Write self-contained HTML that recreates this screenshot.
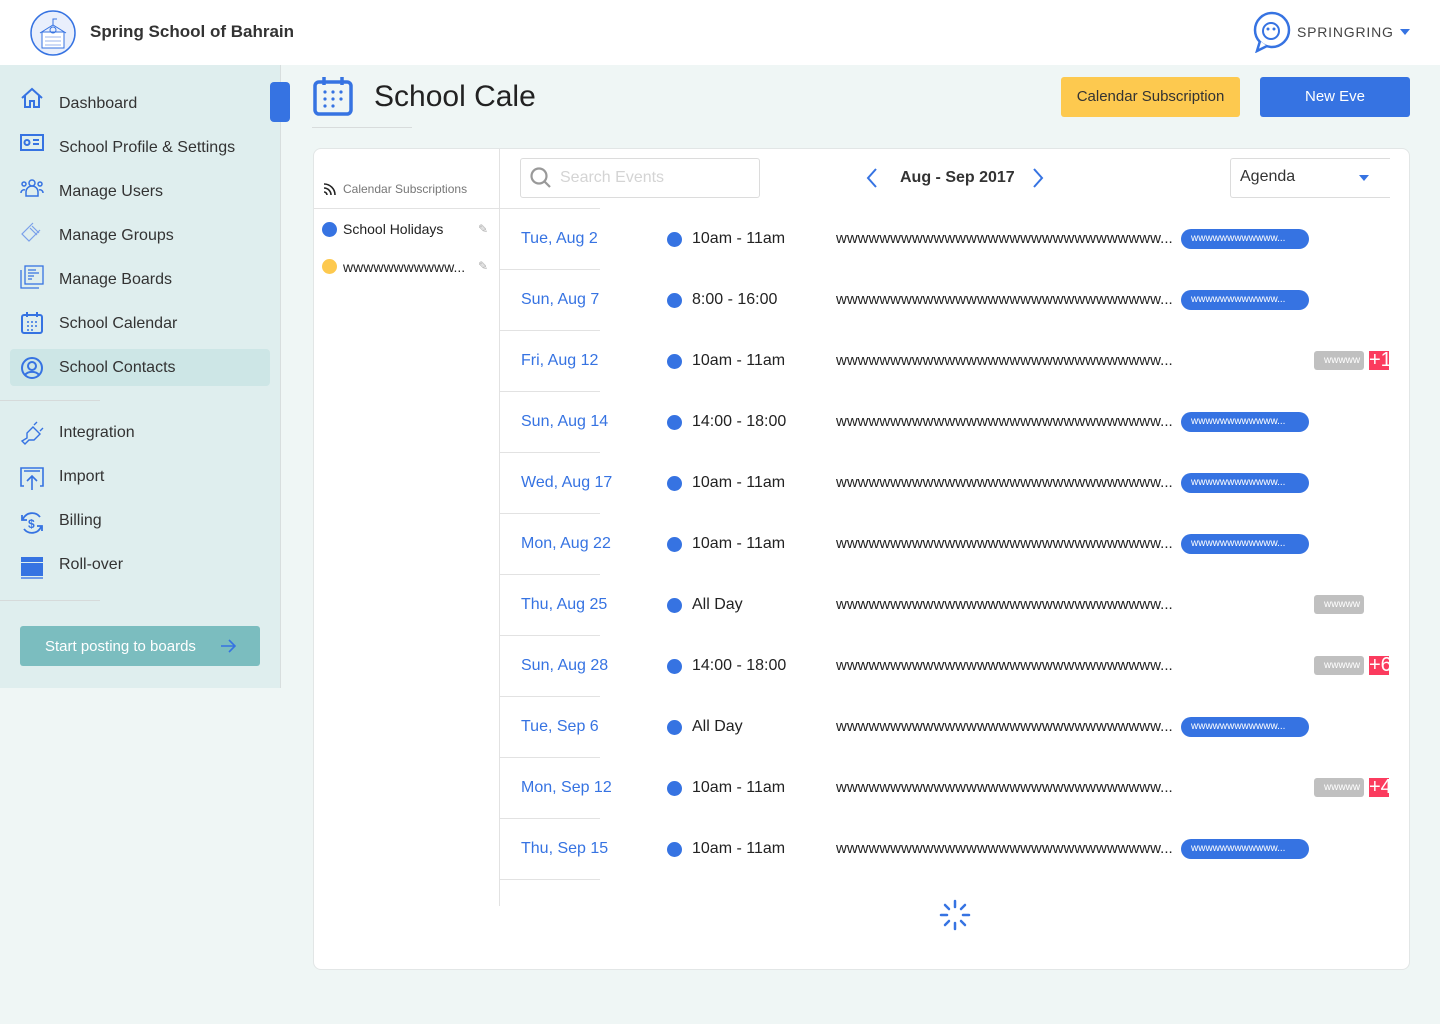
<!DOCTYPE html>
<html><head><meta charset="utf-8"><style>
*{box-sizing:border-box;margin:0;padding:0}
body{width:1440px;height:1024px;background:#eff6f5;font-family:"Liberation Sans",Arial,sans-serif;position:relative;overflow:hidden;color:#333}
.a{position:absolute}
.hdr{left:0;top:0;width:1440px;height:65px;background:#fff}
.side{left:0;top:65px;width:281px;height:623px;background:#dfeeee;border-right:1px solid #d8dede}
.nav{position:absolute;left:59px;font-size:16px;color:#333}
.ic{position:absolute;left:20px;width:24px;height:24px}
.card{left:313px;top:148px;width:1097px;height:822px;background:#fff;border:1px solid #e2e6e6;border-radius:8px}
.date{position:absolute;left:521px;font-size:16px;color:#3673e2}
.dot{position:absolute;left:667px;width:15px;height:15px;border-radius:50%;background:#3673e2}
.time{position:absolute;left:692px;font-size:16px;color:#222}
.ev{position:absolute;left:836px;width:340px;font-size:15px;color:#222;white-space:nowrap;overflow:hidden}
.pill{position:absolute;left:1181px;width:128px;height:20px;border-radius:10px;background:#3673e2;color:#fff;font-size:10px;line-height:20px;padding-left:10px;white-space:nowrap;overflow:hidden}
.gray{position:absolute;left:1314px;width:50px;height:19px;border-radius:3px;background:#c0c0c0;color:#fff;font-size:10px;line-height:19px;padding-left:10px;overflow:hidden;white-space:nowrap}
.red{position:absolute;left:1369px;width:20px;height:19px;background:#fb3b5e;color:#fff;font-size:20px;line-height:19px;overflow:hidden;white-space:nowrap}
.sep{position:absolute;left:500px;width:100px;height:1px;background:#e2e2e2}
</style></head><body>
<div class="a hdr"></div>
<svg class="a" style="left:30px;top:10px" width="46" height="46" viewBox="0 0 46 46"><circle cx="23" cy="23" r="22" fill="#e9effc" stroke="#3673e2" stroke-width="1.5"/><rect x="12" y="22" width="22" height="16" fill="#fff" stroke="#3673e2"/><path d="M10 23 L23 15 L36 23" fill="none" stroke="#3673e2"/><circle cx="23" cy="20" r="3" fill="none" stroke="#3673e2"/><path d="M23 15V9h4" stroke="#3673e2" fill="none"/><path d="M15 27h16M15 31h16M15 35h16" stroke="#9bb6ee"/></svg>
<div class="a" style="left:90px;top:22px;font-size:17px;font-weight:bold;color:#333">Spring School of Bahrain</div>
<svg class="a" style="left:1252px;top:11px" width="40" height="42" viewBox="0 0 40 42"><circle cx="20" cy="19" r="17" fill="none" stroke="#3673e2" stroke-width="2.5"/><path d="M8 30 L5 40 L15 35" fill="#fff" stroke="#3673e2" stroke-width="2.5"/><circle cx="19" cy="20" r="8" fill="none" stroke="#3673e2" stroke-width="2"/><circle cx="16" cy="18" r="1.5" fill="#3673e2"/><circle cx="22" cy="18" r="1.5" fill="#3673e2"/></svg>
<div class="a" style="left:1297px;top:24px;font-size:14px;letter-spacing:0.8px;color:#444">SPRINGRING</div>
<div class="a" style="left:1400px;top:29px;width:0;height:0;border-left:5px solid transparent;border-right:5px solid transparent;border-top:6px solid #3673e2"></div>

<div class="a side"></div>
<div class="a" style="left:270px;top:82px;width:20px;height:40px;border-radius:4px;background:#3673e2"></div>
<div class="a" style="left:10px;top:349px;width:260px;height:37px;border-radius:4px;background:#cde6e6"></div>
<div class="a" style="left:0;top:400px;width:100px;height:1px;background:#d6dada"></div>
<div class="a" style="left:0;top:600px;width:100px;height:1px;background:#d6dada"></div>

<svg class="ic" style="top:86px" viewBox="0 0 24 24" fill="none" stroke="#3673e2" stroke-width="2"><path d="M2 12L12 3l10 9M5 10v11h5v-6h4v6h5V10"/></svg>
<div class="nav" style="top:95px">Dashboard</div>
<svg class="ic" style="top:131px" viewBox="0 0 24 24" fill="none" stroke="#3673e2" stroke-width="2"><rect x="1" y="4" width="22" height="15"/><circle cx="7" cy="11.5" r="2.5"/><path d="M13 9h6M13 13h6"/></svg>
<div class="nav" style="top:139px">School Profile &amp; Settings</div>
<svg class="ic" style="top:176px" viewBox="0 0 24 24" fill="none" stroke="#3673e2" stroke-width="1.5"><circle cx="12" cy="7" r="3"/><circle cx="4" cy="8" r="2"/><circle cx="20" cy="8" r="2"/><path d="M6 20v-4a6 6 0 0112 0v4zM1 17a3 3 0 014-3M23 17a3 3 0 00-4-3"/></svg>
<div class="nav" style="top:183px">Manage Users</div>
<svg class="ic" style="top:221px" viewBox="0 0 24 24" fill="none" stroke="#7aa0ea" stroke-width="1.2"><path d="M13 2L2 13l7 7L20 9M10 7l7 7M12 5l7 7"/></svg>
<div class="nav" style="top:227px">Manage Groups</div>
<svg class="ic" style="top:265px" viewBox="0 0 24 24" fill="none" stroke="#3673e2" stroke-width="1.3"><rect x="5" y="1" width="18" height="18"/><path d="M1 5v18h18M8 5h8M8 8h11M8 11h6M8 14h4"/></svg>
<div class="nav" style="top:271px">Manage Boards</div>
<svg class="ic" style="top:311px" viewBox="0 0 24 24" fill="none" stroke="#3673e2" stroke-width="2"><rect x="2" y="4" width="20" height="18" rx="2"/><path d="M7 1v5M17 1v5" /><g fill="#3673e2" stroke="none"><circle cx="8" cy="11" r="1"/><circle cx="12" cy="11" r="1"/><circle cx="16" cy="11" r="1"/><circle cx="8" cy="15" r="1"/><circle cx="12" cy="15" r="1"/><circle cx="16" cy="15" r="1"/><circle cx="8" cy="19" r="1"/><circle cx="12" cy="19" r="1"/></g></svg>
<div class="nav" style="top:315px">School Calendar</div>
<svg class="ic" style="top:356px" viewBox="0 0 24 24" fill="none" stroke="#3673e2" stroke-width="2"><circle cx="12" cy="12" r="10"/><circle cx="12" cy="10" r="4"/><path d="M5 19a8 6 0 0114 0"/></svg>
<div class="nav" style="top:359px">School Contacts</div>
<svg class="ic" style="top:421px" viewBox="0 0 24 24" fill="none" stroke="#3673e2" stroke-width="1.4"><path d="M2 20l3 3 4-4 5 0 6-6-7-7-6 6 0 5zM14 4l3-3M20 10l3-3"/></svg>
<div class="nav" style="top:424px">Integration</div>
<svg class="ic" style="top:466px" viewBox="0 0 24 24" fill="none" stroke="#3673e2" stroke-width="1.6"><path d="M4 20H1V2h22v18h-3M4 5h16M12 24V10M7 15l5-5 5 5"/></svg>
<div class="nav" style="top:468px">Import</div>
<svg class="ic" style="top:511px" viewBox="0 0 24 24" fill="none" stroke="#3673e2" stroke-width="1.8"><path d="M3 8a10 10 0 0117-2M21 16a10 10 0 01-17 2M2 4v5h5M22 20v-5h-5"/><text x="8" y="17" font-size="12" font-weight="bold" fill="#3673e2" stroke="none" font-family="Liberation Sans">$</text></svg>
<div class="nav" style="top:512px">Billing</div>
<svg class="ic" style="top:556px" viewBox="0 0 24 24"><rect x="1" y="1" width="22" height="5" fill="#3673e2"/><rect x="1" y="7" width="22" height="13" fill="#3673e2"/><rect x="1" y="21" width="22" height="2" fill="#6f9be9"/></svg>
<div class="nav" style="top:556px">Roll-over</div>
<div class="a" style="left:20px;top:626px;width:240px;height:40px;border-radius:3px;background:#7bbdbf"></div>
<div class="a" style="left:45px;top:638px;font-size:15px;color:#fff">Start posting to boards</div>
<svg class="a" style="left:220px;top:639px" width="16" height="14" viewBox="0 0 16 14" fill="none" stroke="#3673e2" stroke-width="1.6"><path d="M1 7h14M9 1l6 6-6 6"/></svg>

<svg class="a" style="left:313px;top:76px" width="40" height="40" viewBox="0 0 40 40"><rect x="2" y="6" width="36" height="32" rx="4" fill="none" stroke="#3673e2" stroke-width="3.5"/><path d="M11 1v8M29 1v8" stroke="#3673e2" stroke-width="3.5"/><g fill="#3673e2"><circle cx="12" cy="16" r="1.6"/><circle cx="20" cy="16" r="1.6"/><circle cx="28" cy="16" r="1.6"/><circle cx="12" cy="23" r="1.6"/><circle cx="20" cy="23" r="1.6"/><circle cx="28" cy="23" r="1.6"/><circle cx="12" cy="30" r="1.6"/><circle cx="20" cy="30" r="1.6"/></g></svg>
<div class="a" style="left:374px;top:80px;font-size:30px;color:#222">School Cale</div>
<div class="a" style="left:312px;top:127px;width:100px;height:1px;background:#d8dcdc"></div>
<div class="a" style="left:1061px;top:77px;width:179px;height:40px;border-radius:3px;background:#fdc94f;color:#333;font-size:15px;text-align:center;line-height:40px">Calendar Subscription</div>
<div class="a" style="left:1260px;top:77px;width:150px;height:40px;border-radius:3px;background:#3673e2;color:#fff;font-size:15px;text-align:center;line-height:40px">New Eve</div>

<div class="a card"></div>
<div class="a" style="left:499px;top:149px;width:1px;height:757px;background:#e2e2e2"></div>
<div class="a" style="left:314px;top:208px;width:286px;height:1px;background:#e2e2e2"></div>
<svg class="a" style="left:323px;top:182px" width="14" height="14" viewBox="0 0 14 14" fill="none" stroke="#222" stroke-width="1.6"><path d="M1 2a11 11 0 0111 11M1 6a7 7 0 017 7M1 10a3 3 0 013 3"/></svg>
<div class="a" style="left:343px;top:182px;font-size:12px;color:#777">Calendar Subscriptions</div>
<div class="a" style="left:322px;top:222px;width:15px;height:15px;border-radius:50%;background:#3673e2"></div>
<div class="a" style="left:343px;top:221px;font-size:14px;color:#222">School Holidays</div>
<div class="a" style="left:322px;top:259px;width:15px;height:15px;border-radius:50%;background:#fdc94f"></div>
<div class="a" style="left:343px;top:259px;font-size:14px;color:#222">wwwwwwwwwww...</div>
<div class="a" style="left:478px;top:222px;font-size:12px;color:#aaa">✎</div>
<div class="a" style="left:478px;top:259px;font-size:12px;color:#aaa">✎</div>

<div class="a" style="left:520px;top:158px;width:240px;height:40px;border:1px solid #dcdcdc;border-radius:3px"></div>
<svg class="a" style="left:530px;top:167px" width="22" height="22" viewBox="0 0 22 22" fill="none" stroke="#999" stroke-width="2.2"><circle cx="9" cy="9" r="7.5"/><path d="M14.5 14.5L20 20"/></svg>
<div class="a" style="left:560px;top:169px;font-size:16px;color:#d4d4d4">Search Events</div>
<svg class="a" style="left:866px;top:168px" width="12" height="20" viewBox="0 0 12 20" fill="none" stroke="#3673e2" stroke-width="2"><path d="M10 1L2 10l8 9"/></svg>
<div class="a" style="left:900px;top:169px;font-size:16px;font-weight:bold;color:#333">Aug - Sep 2017</div>
<svg class="a" style="left:1032px;top:168px" width="12" height="20" viewBox="0 0 12 20" fill="none" stroke="#3673e2" stroke-width="2"><path d="M2 1l8 9-8 9"/></svg>
<div class="a" style="left:1230px;top:158px;width:160px;height:40px;border:1px solid #dcdcdc;border-right:none;border-radius:3px 0 0 3px"></div>
<div class="a" style="left:1240px;top:168px;font-size:16px;color:#333">Agenda</div>
<div class="a" style="left:1359px;top:175px;width:0;height:0;border-left:5px solid transparent;border-right:5px solid transparent;border-top:6px solid #3673e2"></div>

<div class="date" style="top:230px">Tue, Aug 2</div><div class="dot" style="top:232px"></div><div class="time" style="top:230px">10am - 11am</div><div class="ev" style="top:230px">wwwwwwwwwwwwwwwwwwwwwwwwwwwwww...</div><div class="pill" style="top:229px">wwwwwwwwwwww...</div><div class="sep" style="top:269px"></div>
<div class="date" style="top:291px">Sun, Aug 7</div><div class="dot" style="top:293px"></div><div class="time" style="top:291px">8:00 - 16:00</div><div class="ev" style="top:291px">wwwwwwwwwwwwwwwwwwwwwwwwwwwwww...</div><div class="pill" style="top:290px">wwwwwwwwwwww...</div><div class="sep" style="top:330px"></div>
<div class="date" style="top:352px">Fri, Aug 12</div><div class="dot" style="top:354px"></div><div class="time" style="top:352px">10am - 11am</div><div class="ev" style="top:352px">wwwwwwwwwwwwwwwwwwwwwwwwwwwwww...</div><div class="gray" style="top:351px">wwwww</div><div class="red" style="top:351px">+1</div><div class="sep" style="top:391px"></div>
<div class="date" style="top:413px">Sun, Aug 14</div><div class="dot" style="top:415px"></div><div class="time" style="top:413px">14:00 - 18:00</div><div class="ev" style="top:413px">wwwwwwwwwwwwwwwwwwwwwwwwwwwwww...</div><div class="pill" style="top:412px">wwwwwwwwwwww...</div><div class="sep" style="top:452px"></div>
<div class="date" style="top:474px">Wed, Aug 17</div><div class="dot" style="top:476px"></div><div class="time" style="top:474px">10am - 11am</div><div class="ev" style="top:474px">wwwwwwwwwwwwwwwwwwwwwwwwwwwwww...</div><div class="pill" style="top:473px">wwwwwwwwwwww...</div><div class="sep" style="top:513px"></div>
<div class="date" style="top:535px">Mon, Aug 22</div><div class="dot" style="top:537px"></div><div class="time" style="top:535px">10am - 11am</div><div class="ev" style="top:535px">wwwwwwwwwwwwwwwwwwwwwwwwwwwwww...</div><div class="pill" style="top:534px">wwwwwwwwwwww...</div><div class="sep" style="top:574px"></div>
<div class="date" style="top:596px">Thu, Aug 25</div><div class="dot" style="top:598px"></div><div class="time" style="top:596px">All Day</div><div class="ev" style="top:596px">wwwwwwwwwwwwwwwwwwwwwwwwwwwwww...</div><div class="gray" style="top:595px">wwwww</div><div class="sep" style="top:635px"></div>
<div class="date" style="top:657px">Sun, Aug 28</div><div class="dot" style="top:659px"></div><div class="time" style="top:657px">14:00 - 18:00</div><div class="ev" style="top:657px">wwwwwwwwwwwwwwwwwwwwwwwwwwwwww...</div><div class="gray" style="top:656px">wwwww</div><div class="red" style="top:656px">+6</div><div class="sep" style="top:696px"></div>
<div class="date" style="top:718px">Tue, Sep 6</div><div class="dot" style="top:720px"></div><div class="time" style="top:718px">All Day</div><div class="ev" style="top:718px">wwwwwwwwwwwwwwwwwwwwwwwwwwwwww...</div><div class="pill" style="top:717px">wwwwwwwwwwww...</div><div class="sep" style="top:757px"></div>
<div class="date" style="top:779px">Mon, Sep 12</div><div class="dot" style="top:781px"></div><div class="time" style="top:779px">10am - 11am</div><div class="ev" style="top:779px">wwwwwwwwwwwwwwwwwwwwwwwwwwwwww...</div><div class="gray" style="top:778px">wwwww</div><div class="red" style="top:778px">+4</div><div class="sep" style="top:818px"></div>
<div class="date" style="top:840px">Thu, Sep 15</div><div class="dot" style="top:842px"></div><div class="time" style="top:840px">10am - 11am</div><div class="ev" style="top:840px">wwwwwwwwwwwwwwwwwwwwwwwwwwwwww...</div><div class="pill" style="top:839px">wwwwwwwwwwww...</div><div class="sep" style="top:879px"></div>

<svg class="a" style="left:939px;top:899px" width="32" height="32" viewBox="0 0 32 32" stroke="#3673e2" stroke-width="2.5" stroke-linecap="round"><path d="M16 2v6M16 24v6M2 16h6M24 16h6M6 6l4 4M22 22l4 4M6 26l4-4M22 10l4-4"/></svg>
</body></html>
